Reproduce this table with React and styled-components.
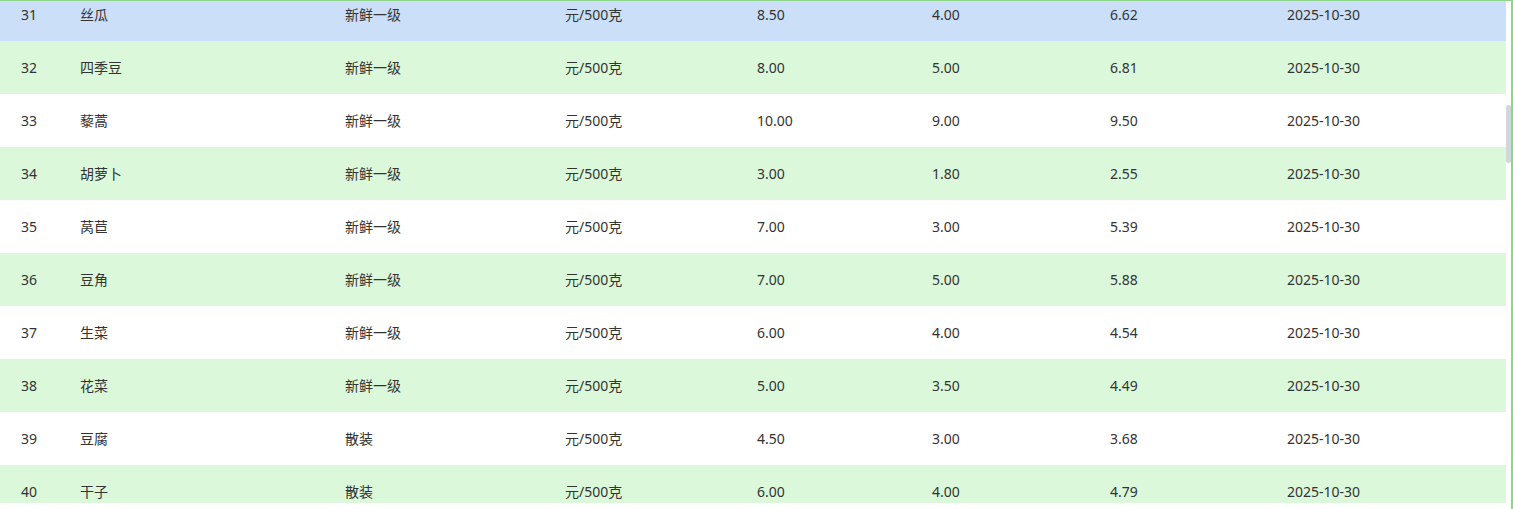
import styled, { createGlobalStyle } from "styled-components";

const GlobalStyle = createGlobalStyle`
  html, body {
    margin: 0;
    padding: 0;
    background: #fff;
  }
  body {
    font-family: "Noto Sans", "Noto Sans CJK SC", sans-serif;
  }
`;

const priceData = [
  { no: 31, name: "丝瓜", grade: "新鲜一级", max: "8.50", min: "4.00", avg: "6.62" },
  { no: 32, name: "四季豆", grade: "新鲜一级", max: "8.00", min: "5.00", avg: "6.81" },
  { no: 33, name: "藜蒿", grade: "新鲜一级", max: "10.00", min: "9.00", avg: "9.50" },
  { no: 34, name: "胡萝卜", grade: "新鲜一级", max: "3.00", min: "1.80", avg: "2.55" },
  { no: 35, name: "莴苣", grade: "新鲜一级", max: "7.00", min: "3.00", avg: "5.39" },
  { no: 36, name: "豆角", grade: "新鲜一级", max: "7.00", min: "5.00", avg: "5.88" },
  { no: 37, name: "生菜", grade: "新鲜一级", max: "6.00", min: "4.00", avg: "4.54" },
  { no: 38, name: "花菜", grade: "新鲜一级", max: "5.00", min: "3.50", avg: "4.49" },
  { no: 39, name: "豆腐", grade: "散装", max: "4.50", min: "3.00", avg: "3.68" },
  { no: 40, name: "干子", grade: "散装", max: "6.00", min: "4.00", avg: "4.79" },
];

const StyledFrame = styled.div`
  display: flex;
  height: 508px;
  border-top: 1px solid #8fd68a;
  border-right: 2px solid #8fd68a;
  box-sizing: content-box;
  width: 1511px;
`;

const StyledViewport = styled.div`
  width: 1506px;
  height: 502px;
  overflow: hidden;
`;

const StyledList = styled.div`
  margin-top: -13px;
`;

const StyledRow = styled.div`
  display: grid;
  grid-template-columns: 80px 265px 220px 192px 175px 178px 177px 1fr;
  align-items: center;
  height: 53px;
  font-size: 14px;
  color: #333;
  background: ${(props) =>
    props.active ? "#cbdff9" : props.even ? "#dbf8da" : "#ffffff"};
`;

const StyledCell = styled.div`
  padding-left: ${(props) => (props.first ? "21px" : "0")};
  white-space: nowrap;
  line-height: 20px;
`;

const StyledTrack = styled.div`
  position: relative;
  width: 5px;
  background: #fff;
`;

const StyledThumb = styled.div`
  position: absolute;
  top: 104px;
  left: 0;
  width: 5px;
  height: 58px;
  border-radius: 3px;
  background: #d2d6dd;
`;

const App = () => (
  <>
    <GlobalStyle />
    <StyledFrame>
      <StyledViewport>
        <StyledList>
          {priceData.map((row) => (
            <StyledRow key={row.no} active={row.no === 31} even={row.no % 2 === 0}>
              <StyledCell first>{row.no}</StyledCell>
              <StyledCell>{row.name}</StyledCell>
              <StyledCell>{row.grade}</StyledCell>
              <StyledCell>元/500克</StyledCell>
              <StyledCell>{row.max}</StyledCell>
              <StyledCell>{row.min}</StyledCell>
              <StyledCell>{row.avg}</StyledCell>
              <StyledCell>2025-10-30</StyledCell>
            </StyledRow>
          ))}
        </StyledList>
      </StyledViewport>
      <StyledTrack>
        <StyledThumb />
      </StyledTrack>
    </StyledFrame>
  </>
);

export default App;
